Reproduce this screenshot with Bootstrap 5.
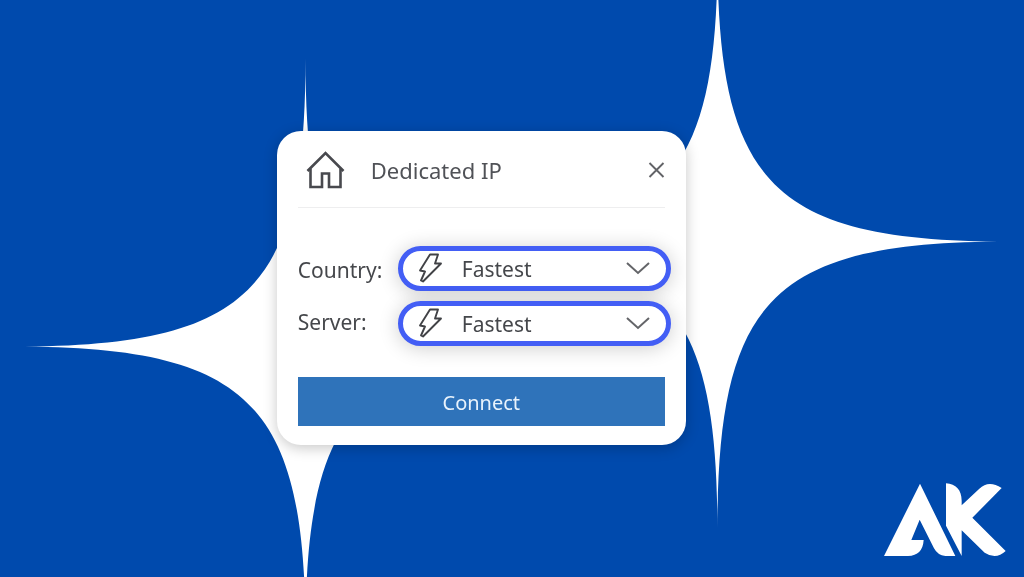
<!DOCTYPE html>
<html lang="en">
<head>
<meta charset="utf-8">
<meta name="viewport" content="width=device-width, initial-scale=1">
<title>Dedicated IP</title>
<link href="https://cdn.jsdelivr.net/npm/bootstrap@5.3.0/dist/css/bootstrap.min.css" rel="stylesheet">
<style>
  body { background: #004aad; color: #45474b; font-family: "Noto Sans", "Open Sans", sans-serif; font-size: 21px; }
  .stage { padding: 0 6vw 2px 0; }
  .backdrop { z-index: -1; }
  .vpn-card { width: 100%; max-width: 409px; border-radius: 24px; padding: 20px 21px 19px; box-shadow: 0 3px 14px rgba(0, 0, 0, .22); }
  .vpn-head { height: 57px; padding: 0 0 17px 8px; border-bottom: 1px solid #eeeeef; }
  .vpn-title { font-size: 22px; line-height: 40px; margin-left: 25px; color: #505257; }
  .close-btn { line-height: 0; color: #626367; }
  .vpn-fields { margin: 36px -6px 29px 0; }
  .field-names label { line-height: 52px; }
  .pickers { gap: 10px; }
  .picker { width: 273px; }
  .picker select { height: 45px; font-size: 21px; line-height: 32px; color: #45474b; border: 5px solid #435ef5; padding: 2px 50px 0 59px; background: #fff; box-shadow: 0 2px 20px rgba(0, 0, 0, .2); }
  .picker svg { position: absolute; top: 0; bottom: 0; margin: auto 0; pointer-events: none; }
  .picker .bolt { left: 20px; }
  .picker .caret { right: 21px; }
  .connect-btn { height: 49px; padding: 4px 0 0; font-size: 20px; background: #2f73ba; color: #e9f3fc; }
  .connect-btn:hover { background: #27659f; color: #fff; }
  .brand-mark { right: 18px; bottom: 20px; }
</style>
</head>
<body>
<svg class="backdrop position-fixed top-0 start-0 w-100 h-100" viewBox="0 0 1024 577" preserveAspectRatio="xMidYMid slice" fill="#fff" aria-hidden="true">
  <defs><path id="star" d="M0-288C0-56 56 0 292 0C56 0 0 56 0 288C0 56-56 0-292 0C-56 0 0-56 0-288Z"/></defs>
  <use href="#star" x="305.500" y="346.500"/>
  <use href="#star" x="717.500" y="241.500"/>
</svg>

<main class="stage min-vh-100 d-flex align-items-center justify-content-center">
  <form class="vpn-card bg-white">
    <header class="vpn-head d-flex align-items-center">
      <svg width="40" height="38" viewBox="0 0 40 38" fill="none" stroke="#48494e" stroke-width="2.600" aria-hidden="true"><path d="M1.500 20L19.500 2L37.500 20"/><path d="M4.500 17.500V36H16V22.500H23V36H34.500V17.500"/></svg>
      <h1 class="vpn-title mb-0 fw-normal">Dedicated IP</h1>
      <button type="button" class="close-btn btn p-0 border-0 ms-auto" aria-label="Close">
        <svg width="17" height="17" viewBox="0 0 17 17" stroke="currentColor" stroke-width="1.900"><path d="M1.500 1L15.500 15M15.500 1L1.500 15"/></svg>
      </button>
    </header>

    <div class="vpn-fields d-flex align-items-center justify-content-between">
      <div class="field-names d-flex flex-column">
        <label for="country">Country:</label>
        <label for="server">Server:</label>
      </div>
      <div class="pickers d-flex flex-column">
        <div class="picker position-relative">
          <select id="country" class="form-select rounded-pill"><option>Fastest</option></select>
          <svg class="bolt" width="24" height="30" viewBox="0 0 24 30" fill="none" stroke="#414246" stroke-width="1.900" stroke-linejoin="round"><path d="M12 1.500H20L17 10.500H23L5 28.500L3 27.500L7 18.500L2 17.500Z"/></svg>
          <svg class="caret" width="24" height="13" viewBox="0 0 24 13" fill="none" stroke="#646569" stroke-width="2"><path d="M1 1L12 11L23 1"/></svg>
        </div>
        <div class="picker position-relative">
          <select id="server" class="form-select rounded-pill"><option>Fastest</option></select>
          <svg class="bolt" width="24" height="30" viewBox="0 0 24 30" fill="none" stroke="#414246" stroke-width="1.900" stroke-linejoin="round"><path d="M12 1.500H20L17 10.500H23L5 28.500L3 27.500L7 18.500L2 17.500Z"/></svg>
          <svg class="caret" width="24" height="13" viewBox="0 0 24 13" fill="none" stroke="#646569" stroke-width="2"><path d="M1 1L12 11L23 1"/></svg>
        </div>
      </div>
    </div>

    <button type="submit" class="connect-btn btn w-100 rounded-0 border-0">Connect</button>
  </form>
</main>

<svg class="brand-mark position-fixed" width="122" height="74" viewBox="29 38 366 222" fill="#fff" role="img" aria-label="AK">
  <path d="M137 40L243 257H213Q190 255 179 234L136 148L111 209H148Q145 256 101 257H29Z"/>
  <path d="M215 39C245 41 262 59 262 91V105L315 55Q343 28 382 53L294 142L394 242Q365 269 331 247L262 180V257L215 166Z"/>
</svg>
<script src="https://cdn.jsdelivr.net/npm/bootstrap@5.3.0/dist/js/bootstrap.bundle.min.js"></script>
</body>
</html>
